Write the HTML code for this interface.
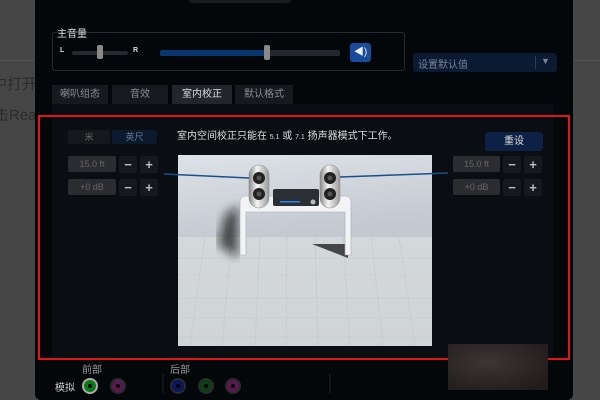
<!DOCTYPE html><html><head><meta charset="utf-8"><style>
*{margin:0;padding:0;box-sizing:border-box}
body{width:600px;height:400px;overflow:hidden;background:#464646;position:relative;font-family:"Liberation Sans","Noto Sans CJK SC",sans-serif}
.a{position:absolute}
.t{color:#ccc;font-size:10px;white-space:nowrap}
.btn{position:absolute;background:#1c1f23;color:#666;font-size:9px;text-align:center;border-radius:2px}
.ctl{position:absolute;background:#15181c;color:#bbb;font-size:13px;line-height:17px;text-align:center;font-weight:bold;border-radius:2px}
.tab{position:absolute;top:85px;height:19px;background:#16191d;color:#8a8d90;font-size:10px;line-height:19px;text-align:center}
.jack{position:absolute;width:16px;height:16px;border-radius:50%;border:2px solid #2a2a2a}
.jack:after{content:"";position:absolute;left:4px;top:4px;width:4px;height:4px;border-radius:50%;background:#000}
</style></head><body>
<div class="a" style="left:0;top:60px;width:35px;height:1px;background:#555"></div>
<div class="a t" style="left:-8px;top:73px;font-size:15px;color:#2c2c2c">中打开</div>
<div class="a t" style="left:-6px;top:104px;font-size:15px;color:#2c2c2c">击Rea</div>
<div class="a" style="left:573px;top:60px;width:27px;height:1px;background:#555"></div>
<div class="a" style="left:35px;top:0;width:538px;height:400px;background:#04070a;border-radius:0 0 6px 6px"></div>
<div class="a" style="left:188px;top:-6px;width:104px;height:9px;border-radius:5px;background:#1a1d20"></div>
<div class="a" style="left:52px;top:32px;width:353px;height:39px;border:1px solid #262a30;border-radius:3px"></div>
<div class="a t" style="left:57px;top:25px;font-size:10px;color:#ddd">主音量</div>
<div class="a t" style="left:60px;top:47px;font-size:7px;color:#ddd;font-weight:bold">L</div>
<div class="a" style="left:72px;top:51px;width:56px;height:4px;background:#262a2e;border-radius:2px"></div>
<div class="a" style="left:97px;top:45px;width:6px;height:14px;background:#888;border-radius:2px"></div>
<div class="a t" style="left:133px;top:47px;font-size:7px;color:#ddd;font-weight:bold">R</div>
<div class="a" style="left:160px;top:50px;width:180px;height:6px;background:#23272b;border-radius:2px"></div>
<div class="a" style="left:160px;top:50px;width:107px;height:6px;background:#0a3670;border-radius:2px"></div>
<div class="a" style="left:264px;top:45px;width:6px;height:15px;background:#888;border-radius:2px"></div>
<div class="a" style="left:350px;top:43px;width:21px;height:19px;background:#1a4a9a;border-radius:3px;color:#eee;font-size:10px;text-align:center;line-height:19px">◀)</div>
<div class="a" style="left:413px;top:53px;width:144px;height:19px;background:#0b1a33;border-radius:3px"></div>
<div class="a t" style="left:418px;top:56px;color:#7a8494">设置默认值</div>
<div class="a" style="left:535px;top:56px;width:1px;height:13px;background:#2b3d5a"></div>
<div class="a t" style="left:541px;top:56px;color:#7a8494;font-size:9px">▼</div>
<div class="tab" style="left:52px;width:56px">喇叭组态</div>
<div class="tab" style="left:112px;width:56px">音效</div>
<div class="tab" style="left:172px;width:60px;background:#22262b;color:#ddd">室内校正</div>
<div class="tab" style="left:235px;width:58px">默认格式</div>
<div class="a" style="left:52px;top:104px;width:501px;height:253px;background:#0a0d11"></div>
<div class="a" style="left:38px;top:115px;width:532px;height:245px;border:2px solid #e3141c"></div>
<div class="btn" style="left:68px;top:130px;width:42px;height:14px;line-height:14px;background:#15181c">米</div>
<div class="btn" style="left:112px;top:130px;width:45px;height:14px;line-height:14px;background:#0b1a2e;color:#6a7a90">英尺</div>
<div class="a t" style="left:177px;top:127px;color:#ddd">室内空间校正只能在 <span style="font-size:7px">5.1</span> 或 <span style="font-size:7px">7.1</span> 扬声器模式下工作。</div>
<div class="a" style="left:485px;top:132px;width:58px;height:19px;background:#0d2146;border-radius:3px;color:#ddd;font-size:10px;text-align:center;line-height:19px">重设</div>
<div class="btn" style="left:68px;top:156px;width:48px;height:16px;line-height:16px;background:#2a2c2f">15.0 ft</div>
<div class="ctl" style="left:119px;top:156px;width:18px">−</div>
<div class="ctl" style="left:140px;top:156px;width:18px">+</div>
<div class="btn" style="left:68px;top:179px;width:48px;height:16px;line-height:16px;background:#2a2c2f">+0 dB</div>
<div class="ctl" style="left:119px;top:179px;width:18px">−</div>
<div class="ctl" style="left:140px;top:179px;width:18px">+</div>
<div class="btn" style="left:453px;top:156px;width:47px;height:16px;line-height:16px;background:#2a2c2f">15.0 ft</div>
<div class="ctl" style="left:503px;top:156px;width:18px">−</div>
<div class="ctl" style="left:524px;top:156px;width:18px">+</div>
<div class="btn" style="left:453px;top:179px;width:47px;height:16px;line-height:16px;background:#2a2c2f">+0 dB</div>
<div class="ctl" style="left:503px;top:179px;width:18px">−</div>
<div class="ctl" style="left:524px;top:179px;width:18px">+</div>
<svg class="a" style="left:0;top:0" width="600" height="400">
<defs>
<linearGradient id="w" x1="0" y1="0" x2="0.3" y2="1"><stop offset="0" stop-color="#dde2e8"/><stop offset="1" stop-color="#c4c8d0"/></linearGradient>
<linearGradient id="f" x1="0" y1="0" x2="0" y2="1"><stop offset="0" stop-color="#d3d8da"/><stop offset="1" stop-color="#cfd4d6"/></linearGradient>
<linearGradient id="sp" x1="0" y1="0" x2="1" y2="0"><stop offset="0" stop-color="#888"/><stop offset=".4" stop-color="#f4f4f4"/><stop offset="1" stop-color="#999"/></linearGradient>
<radialGradient id="br" cx=".4" cy=".4" r=".7"><stop offset="0" stop-color="#3d3535"/><stop offset="1" stop-color="#221c1c"/></radialGradient>
<filter id="bl"><feGaussianBlur stdDeviation="5"/></filter>
</defs>
<rect x="178" y="155" width="254" height="83" fill="url(#w)"/>
<rect x="178" y="237" width="254" height="109" fill="url(#f)"/>
<g stroke="#c3c8ca" stroke-width="0.6">
<line x1="178" y1="258" x2="432" y2="258"/><line x1="178" y1="275" x2="432" y2="275"/><line x1="178" y1="298" x2="432" y2="298"/><line x1="178" y1="318" x2="432" y2="318"/><line x1="178" y1="337" x2="432" y2="337"/>
<line x1="205" y1="237" x2="190" y2="346"/><line x1="232" y1="237" x2="222" y2="346"/><line x1="260" y1="237" x2="255" y2="346"/><line x1="287" y1="237" x2="286" y2="346"/><line x1="315" y1="237" x2="318" y2="346"/><line x1="343" y1="237" x2="350" y2="346"/><line x1="371" y1="237" x2="383" y2="346"/><line x1="399" y1="237" x2="415" y2="346"/>
</g>
<path d="M238 205 L225 215 L218 245 L238 258 Z" fill="#111" opacity=".7" filter="url(#bl)"/>
<polygon points="312,244 348,244 348,258" fill="#222" opacity=".8"/>
<path d="M240 202 Q240 196 246 196 L345 196 Q351 196 351 202 L351 255 L345 255 L345 212 L246 212 L246 255 L240 255 Z" fill="#f2f3f5" stroke="#aab" stroke-width=".6"/>
<rect x="273" y="189" width="46" height="17" rx="2" fill="#2b2e33"/>
<rect x="280" y="201" width="20" height="1.5" fill="#2a8af0"/>
<circle cx="313" cy="202" r="2.5" fill="#bbb"/>
<rect x="249" y="165" width="20" height="43" rx="10" fill="url(#sp)" stroke="#888" stroke-width=".5"/>
<circle cx="259" cy="178" r="6" fill="#222"/><circle cx="259" cy="178" r="2.5" fill="#555"/>
<circle cx="259" cy="194" r="6" fill="#222"/><circle cx="259" cy="194" r="2.5" fill="#555"/>
<rect x="320" y="165" width="20" height="43" rx="10" fill="url(#sp)" stroke="#888" stroke-width=".5"/>
<circle cx="330" cy="178" r="6" fill="#222"/><circle cx="330" cy="178" r="2.5" fill="#555"/>
<circle cx="330" cy="194" r="6" fill="#222"/><circle cx="330" cy="194" r="2.5" fill="#555"/>
<line x1="164" y1="174" x2="249" y2="178" stroke="#1a4f8a" stroke-width="1.5"/>
<line x1="340" y1="177" x2="448" y2="173" stroke="#1a4f8a" stroke-width="1.5"/>
<rect x="448" y="344" width="100" height="46" fill="url(#br)"/>
<line x1="163" y1="374" x2="163" y2="393" stroke="#222"/>
<line x1="330" y1="374" x2="330" y2="393" stroke="#222"/>
</svg>
<div class="a t" style="left:82px;top:361px;color:#999">前部</div>
<div class="a t" style="left:170px;top:361px;color:#999">后部</div>
<div class="a t" style="left:55px;top:379px;color:#ccc">模拟</div>
<div class="jack" style="left:82px;top:378px;background:#0a7a12;border-color:#aaa"></div>
<div class="jack" style="left:110px;top:378px;background:#5a1850"></div>
<div class="jack" style="left:170px;top:378px;background:#0a1660"></div>
<div class="jack" style="left:198px;top:378px;background:#0a3e14"></div>
<div class="jack" style="left:225px;top:378px;background:#5a1850"></div>
</body></html>
